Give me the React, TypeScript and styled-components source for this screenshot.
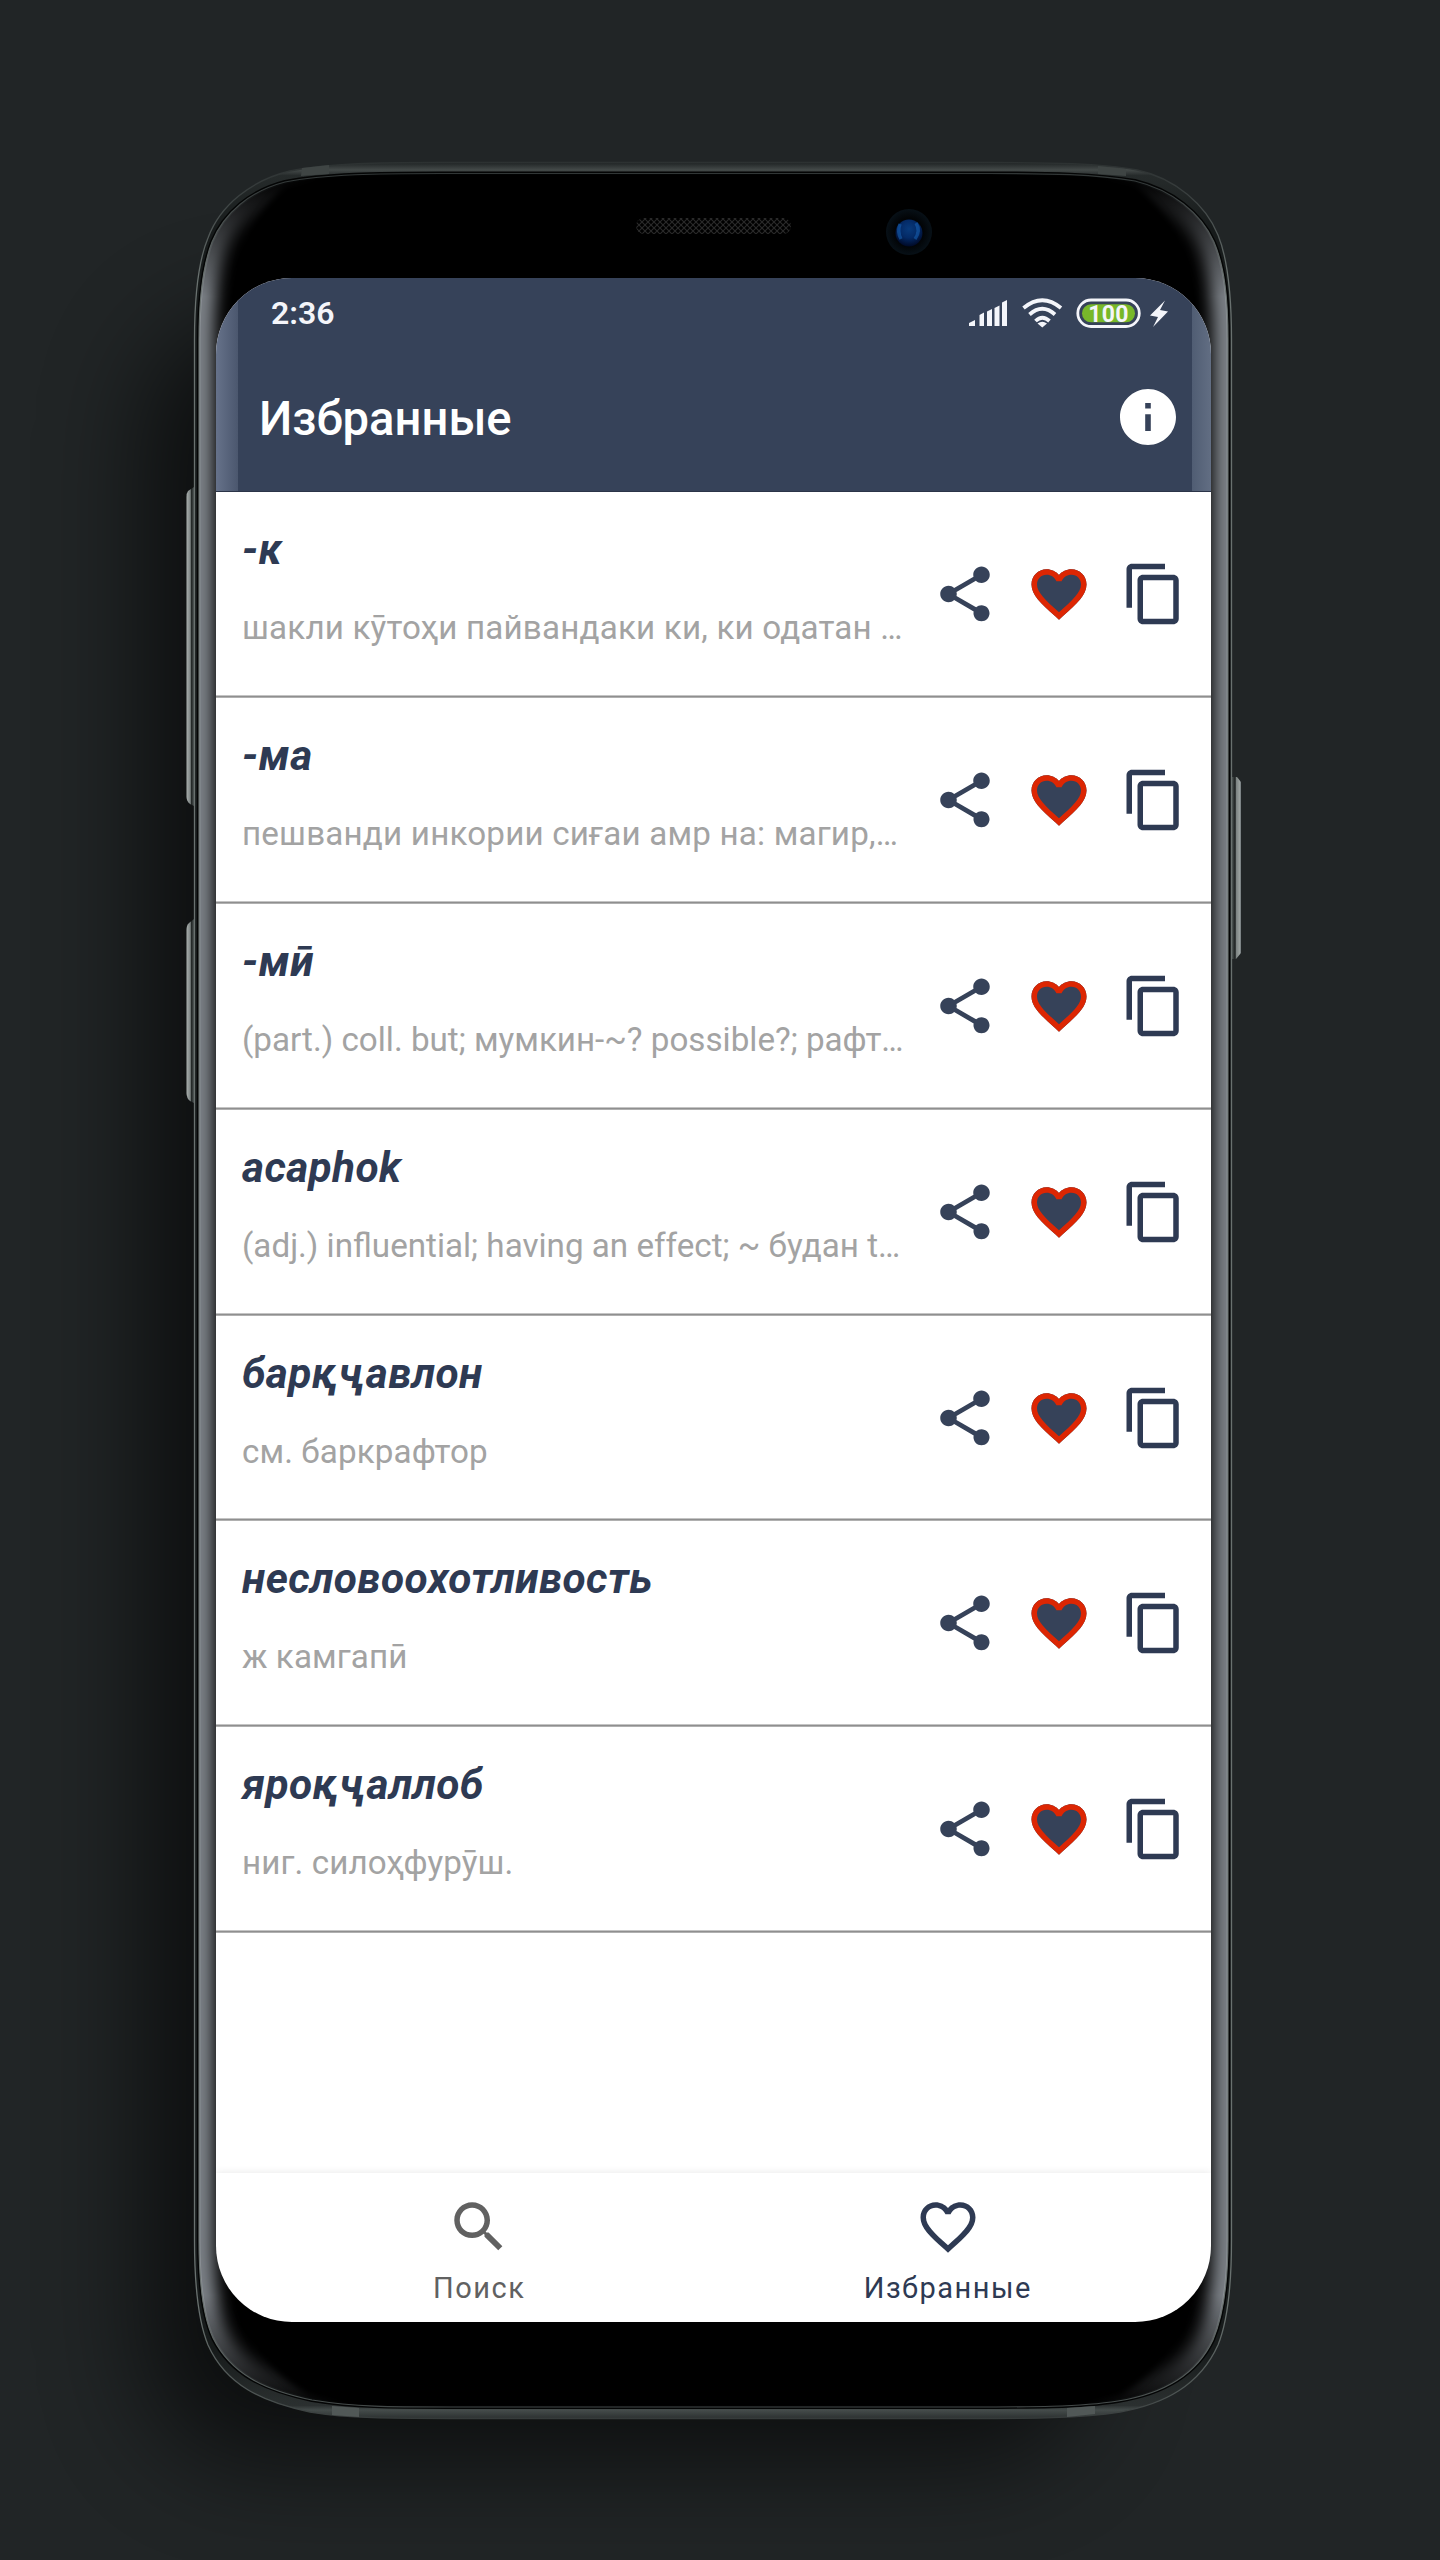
import React from "react";
import styled, { createGlobalStyle } from "styled-components";

const Global = createGlobalStyle`
  *{box-sizing:border-box}
  body{margin:0;background:#212526;font-family:Roboto,"Noto Sans",sans-serif}
`;

const Stage = styled.main`
  position: relative;
  width: 1440px;
  height: 2560px;
  padding: 278px 229px 238px 216px;
  display: flex;
  overflow: hidden;
  background: #212526;
`;

const DeviceArt = styled.svg`
  position: absolute;
  inset: 0;
`;

const Screen = styled.section`
  position: relative;
  flex: 1;
  display: flex;
  flex-direction: column;
  overflow: hidden;
  border-radius: 76px;
  background: #fff;
`;

const Header = styled.header`
  height: 214px;
  display: flex;
  flex-direction: column;
  background: linear-gradient(90deg, #66728a 0, #4b576e 22px, #364259 22px, #364259 976px, #505d73 976px, #626e83 100%);
  border-bottom: 1px solid #2b3448;
  color: #fff;
`;

const StatusBar = styled.div`
  height: 71px;
  padding: 0 40px 0 55px;
  display: flex;
  align-items: center;
  justify-content: space-between;
`;

const Clock = styled.span`
  padding-bottom: 2px;
  font-size: 32px;
  font-weight: 600;
  line-height: 38px;
  color: #f4f5fa;
`;

const StatusIcons = styled.svg`
  width: 206px;
  height: 36px;
  display: block;
`;

const TitleBar = styled.div`
  flex: 1;
  padding: 0 35px 7px 43px;
  display: flex;
  align-items: center;
  justify-content: space-between;
`;

const Title = styled.h1`
  margin: 0;
  padding-top: 4px;
  font-size: 47.2px;
  line-height: 54px;
  font-weight: 500;
`;

const Glyph = styled.svg<{ $size: number }>`
  width: ${(p) => p.$size}px;
  height: ${(p) => p.$size}px;
  display: block;
  flex: none;
`;

const List = styled.ul`
  list-style: none;
  margin: 0;
  padding: 0;
  flex: 1;
`;

const Row = styled.li`
  height: 205.9px;
  padding: 0 24px 2px 26px;
  display: flex;
  align-items: center;
  justify-content: space-between;
  background: linear-gradient(#c4c4c4 0 1px, #8f8f8f 1px 2px, #b0b0b0 2px 3px) bottom / 100% 3px no-repeat;
`;

const Entry = styled.div`
  width: 664px;
  height: 100%;
  padding-top: 33px;
  display: flex;
  flex-direction: column;
  gap: 28px;
`;

const Word = styled.h2`
  margin: 0;
  font-size: 42.4px;
  line-height: 50px;
  letter-spacing: 0.38px;
  font-weight: 700;
  font-style: italic;
  color: #2e3a53;
`;

const Meaning = styled.p<{ $spacing?: number }>`
  margin: 0;
  font-size: 33.2px;
  line-height: 50px;
  letter-spacing: ${(p) => p.$spacing ?? 0.18}px;
  color: #a3a3a3;
  white-space: nowrap;
`;

const Actions = styled.div`
  display: grid;
  grid-template-columns: 94px 95px 66px;
  align-items: center;
`;

const IconButton = styled.button`
  padding: 0;
  border: 0;
  background: none;
`;

const BottomNav = styled.nav`
  height: 149px;
  display: grid;
  padding: 0 29px;
  grid-template-columns: 1fr 1fr;
  box-shadow: 0 0 8px rgba(0, 0, 0, 0.1);
`;

const Tab = styled.a<{ $active?: boolean }>`
  display: flex;
  flex-direction: column;
  align-items: center;
  padding-top: 21px;
  gap: 8px;
  color: ${(p) => (p.$active ? "#2e3a53" : "#616161")};
  font-size: 29px;
  line-height: 40px;
  letter-spacing: 1.5px;
`;

const HEART =
  "M16.5 3c-1.74 0-3.41.81-4.5 2.09C10.91 3.81 9.24 3 7.5 3 4.42 3 2 5.42 2 8.5c0 3.78 3.4 6.86 8.55 11.54L12 21.35l1.45-1.32C18.6 15.36 22 12.28 22 8.5 22 5.42 19.58 3 16.5 3z";
const HEART_HOLE =
  "m-4.4 15.55-.1.1-.1-.1C7.14 14.24 4 11.39 4 8.5 4 6.5 5.5 5 7.5 5c1.54 0 3.04.99 3.57 2.36h1.87C13.46 5.99 14.96 5 16.5 5c2 0 3.5 1.5 3.5 3.5 0 2.89-3.14 5.74-7.9 10.05z";

const ShareIcon = () => (
  <Glyph $size={66} viewBox="0 0 24 24" fill="#364259">
    <path d="M18 16.08c-.76 0-1.44.3-1.96.77L8.91 12.7c.05-.23.09-.46.09-.7s-.04-.47-.09-.7l7.05-4.11c.54.5 1.25.81 2.04.81 1.66 0 3-1.34 3-3s-1.34-3-3-3-3 1.34-3 3c0 .24.04.47.09.7L8.04 9.81C7.5 9.31 6.79 9 6 9c-1.66 0-3 1.34-3 3s1.34 3 3 3c.79 0 1.5-.31 2.04-.81l7.12 4.16c-.05.21-.08.43-.08.65 0 1.61 1.31 2.92 2.92 2.92s2.92-1.31 2.92-2.92-1.31-2.92-2.92-2.92z" />
  </Glyph>
);

const FavoriteIcon = () => (
  <Glyph $size={66} viewBox="0 0 24 24">
    <path d={HEART} fill="#364259" />
    <path d={HEART + HEART_HOLE} fill="#dc2603" />
  </Glyph>
);

const CopyIcon = () => (
  <Glyph $size={66} viewBox="0 0 24 24" fill="#2e3a53">
    <path d="M16 1H4c-1.1 0-2 .9-2 2v14h2V3h12V1zm3 4H8c-1.1 0-2 .9-2 2v14c0 1.1.9 2 2 2h11c1.1 0 2-.9 2-2V7c0-1.1-.9-2-2-2zm0 16H8V7h11v14z" />
  </Glyph>
);

const entries: { word: string; meaning: string; spacing?: number }[] = [
  { word: "-к", meaning: "шакли кӯтоҳи пайвандаки ки, ки одатан …" },
  { word: "-ма", meaning: "пешванди инкории сиғаи амр на: магир,…" },
  { word: "-мӣ", meaning: "(part.) coll. but; мумкин-~? possible?; рафт…", spacing: 0 },
  { word: "acaphok", meaning: "(adj.) influential; having an effect; ~ будан t…", spacing: 0 },
  { word: "барқҷавлон", meaning: "см. баркрафтор", spacing: 0.1 },
  { word: "несловоохотливость", meaning: "ж камгапӣ", spacing: 0.1 },
  { word: "яроқҷаллоб", meaning: "ниг. силоҳфурӯш.", spacing: 0.1 },
];

const BODY =
  "M194.500 340C194.500 300 198 262 208 238C220 205 252 180 290 171C330 163 380 162.500 440 162.500H990C1050 162.500 1100 163 1137 170C1175 178 1206 205 1218 235C1229 262 1231.500 300 1231.500 340V2240C1231.500 2280 1229 2318 1218 2345C1200 2385 1165 2404 1120 2412C1080 2418.500 1030 2418.500 970 2418.500H450C390 2418.500 350 2418.500 310 2412C262 2402 226 2385 208 2345C197 2318 194.500 2280 194.500 2240Z";
const GLASS =
  "M199 340C199 300 202 268 212 242C224 213 250 191 285 182C325 174 380 173.500 440 173.500H990C1050 173.500 1095 174 1135 181C1172 190 1201 213 1214 242C1225 268 1228 300 1228 340V2240C1228 2280 1224 2314 1213 2340C1196 2376 1162 2394 1118 2401C1080 2407 1030 2407 970 2407H450C390 2407 355 2407 312 2400C264 2390 231 2374 213 2338C202 2314 199 2280 199 2240Z";

const Device = () => (
  <DeviceArt width="1440" height="2560" viewBox="0 0 1440 2560">
    <defs>
      <filter id="soft" filterUnits="userSpaceOnUse" x="-100" y="0" width="1640" height="2760" colorInterpolationFilters="sRGB">
        <feGaussianBlur stdDeviation="52" />
      </filter>
      <filter id="sheen" filterUnits="userSpaceOnUse" x="150" y="130" width="1140" height="2330" colorInterpolationFilters="sRGB">
        <feGaussianBlur stdDeviation="8" />
      </filter>
      <filter id="edge" filterUnits="userSpaceOnUse" x="150" y="130" width="1140" height="2330" colorInterpolationFilters="sRGB">
        <feGaussianBlur stdDeviation="3" />
      </filter>
      <linearGradient id="fade" gradientUnits="userSpaceOnUse" x1="0" x2="0" y1="174" y2="2407">
        <stop offset="0" stopColor="#000" />
        <stop offset=".008" stopColor="#1a1a1a" />
        <stop offset=".055" stopColor="#fff" />
        <stop offset=".95" stopColor="#fff" />
        <stop offset=".99" stopColor="#333" />
        <stop offset="1" stopColor="#000" />
      </linearGradient>
      <mask id="sides" maskUnits="userSpaceOnUse" x="0" y="0" width="1440" height="2560">
        <rect width="1440" height="2560" fill="url(#fade)" />
      </mask>
      <linearGradient id="button" x1="0" x2="1" y1="0" y2="0">
        <stop offset="0" stopColor="#a9afad" />
        <stop offset=".5" stopColor="#7e8584" />
        <stop offset=".65" stopColor="#222726" />
        <stop offset="1" stopColor="#4c5352" />
      </linearGradient>
      <linearGradient id="buttonRight" x1="1" x2="0" y1="0" y2="0">
        <stop offset="0" stopColor="#6c7478" />
        <stop offset=".15" stopColor="#9aa19f" />
        <stop offset=".5" stopColor="#7e8584" />
        <stop offset=".65" stopColor="#1c2020" />
        <stop offset="1" stopColor="#4c5352" />
      </linearGradient>
      <linearGradient id="rim" gradientUnits="userSpaceOnUse" x1="0" x2="0" y1="162" y2="2419">
        <stop offset="0" stopColor="#1c2021" />
        <stop offset=".0035" stopColor="#444a49" />
        <stop offset=".006" stopColor="#262b2b" />
        <stop offset=".03" stopColor="#171b1b" />
        <stop offset=".97" stopColor="#171b1b" />
        <stop offset=".994" stopColor="#2b3030" />
        <stop offset=".996" stopColor="#454c4b" />
        <stop offset="1" stopColor="#2a2f2f" />
      </linearGradient>
      <linearGradient id="outline" gradientUnits="userSpaceOnUse" x1="0" x2="0" y1="162" y2="2419">
        <stop offset="0" stopColor="#2c3131" />
        <stop offset=".015" stopColor="#3a4040" />
        <stop offset=".05" stopColor="#69716f" />
        <stop offset=".95" stopColor="#69716f" />
        <stop offset=".99" stopColor="#4c5352" />
        <stop offset="1" stopColor="#353a3a" />
      </linearGradient>
      <radialGradient id="lens" cx=".5" cy=".35" r=".65">
        <stop offset="0" stopColor="#083a7c" />
        <stop offset=".5" stopColor="#042a66" />
        <stop offset="1" stopColor="#000926" />
      </radialGradient>
      <radialGradient id="lensRing">
        <stop offset=".6" stopColor="#020406" />
        <stop offset="1" stopColor="#071017" />
      </radialGradient>
      <pattern id="mesh" width="6" height="6" patternUnits="userSpaceOnUse">
        <path d="M0 0L6 6M6 0L0 6" stroke="#2a2a2a" strokeWidth="1.1" />
      </pattern>
      <clipPath id="glassClip">
        <path d={GLASS} />
      </clipPath>
    </defs>
    <rect x="145" y="320" width="940" height="2140" rx="110" fill="#000" opacity=".62" filter="url(#soft)" />
    <path d="M194 487L188 491Q186.500 493 186.500 497V797Q186.500 801 190 804L194 806Z" fill="url(#button)" />
    <path d="M194 919L189 923Q186.500 925 186.500 930V1093Q186.500 1098 190 1101L194 1103Z" fill="url(#button)" />
    <path d="M1232 777H1237L1241 782V953L1236 959H1232Z" fill="url(#buttonRight)" />
    <path d={BODY} fill="url(#rim)" stroke="url(#outline)" strokeWidth="1.3" />
    <path d={GLASS} fill="#000" stroke="#040505" strokeWidth="4" />
    <g clipPath="url(#glassClip)">
      <g mask="url(#sides)">
        <path d={GLASS} fill="none" stroke="#7c8187" strokeWidth="30" filter="url(#sheen)" />
        <path d={GLASS} fill="none" stroke="#9ea3a8" strokeWidth="3" opacity=".5" />
      </g>
      <path
        d="M238 360V285C240 245 258 212 285 186L330 174H1090L1135 184C1164 210 1188 245 1191 290V2290C1186 2330 1160 2370 1120 2396L1080 2407H350L310 2396C266 2370 242 2330 238 2290Z"
        fill="#000"
        filter="url(#edge)"
      />
    </g>
    <path d={GLASS} fill="none" stroke="url(#outline)" strokeWidth="1.1" />
    <path d="M302 168L329 165L329 174L301 176Z" fill="#3f4544" />
    <path d="M1098 166L1126 169L1126 176L1098 174Z" fill="#3f4544" />
    <path d="M332 2406L359 2408L359 2417L332 2415Z" fill="#515857" />
    <path d="M1067 2408L1095 2406L1095 2414L1067 2417Z" fill="#515857" />
    <rect x="636" y="218" width="155" height="16" rx="8" fill="url(#mesh)" />
    <circle cx="909" cy="232" r="23" fill="url(#lensRing)" />
    <circle cx="909" cy="233" r="13.500" fill="url(#lens)" />
    <path d="M900 224Q897 232 901 239M916 223Q921 231 915 239" fill="none" stroke="#1a6abf" strokeWidth="3.500" opacity=".5" />
  </DeviceArt>
);

const Status = () => (
  <StatusIcons viewBox="965 296 206 36" fill="#f4f5fa">
    <path d="M969 326V323L975 320V326ZM979.500 326V315L984 312.500V326ZM987 326V311.500L992 309V326ZM994.500 326V308L999.500 305.500V326ZM1002 326V302.500L1007 300V326Z" />
    <g fill="none" stroke="#f4f5fa" strokeWidth="3.800">
      <path d="M1023.500 308Q1042.300 292.500 1061 308" />
      <path d="M1029.500 314.500Q1042.300 303 1055 314.500" />
      <path d="M1035.500 321Q1042.300 314.500 1049.500 321" />
    </g>
    <path d="M1037.500 323.500Q1042.300 320 1047 323.500L1042.300 327.500Z" />
    <rect x="1077.800" y="300" width="61.500" height="26.500" rx="13.250" fill="none" stroke="#f4f5fa" strokeWidth="2.800" />
    <rect x="1082" y="304.300" width="53" height="18" rx="9" fill="#78b82a" />
    <text x="1108.500" y="321.500" textAnchor="middle" fontSize="23" fontWeight="700" fontFamily="Roboto" letterSpacing=".3">100</text>
    <path d="M1165 300.500L1150 315.500L1158 317L1153 327L1168 311.500L1160 310Z" />
  </StatusIcons>
);

export default function App() {
  return (
    <Stage>
      <Global />
      <Device />
      <Screen>
        <Header>
          <StatusBar>
            <Clock>2:36</Clock>
            <Status />
          </StatusBar>
          <TitleBar>
            <Title>Избранные</Title>
            <Glyph $size={56} viewBox="2 2 20 20" fill="#fff">
              <path d="M12 2C6.480 2 2 6.480 2 12s4.480 10 10 10 10-4.480 10-10S17.520 2 12 2zm1 15h-2v-6h2v6zm0-8h-2V7h2v2z" />
            </Glyph>
          </TitleBar>
        </Header>
        <List>
          {entries.map((e) => (
            <Row key={e.word}>
              <Entry>
                <Word>{e.word}</Word>
                <Meaning $spacing={e.spacing}>{e.meaning}</Meaning>
              </Entry>
              <Actions>
                <IconButton><ShareIcon /></IconButton>
                <IconButton><FavoriteIcon /></IconButton>
                <IconButton><CopyIcon /></IconButton>
              </Actions>
            </Row>
          ))}
        </List>
        <BottomNav>
          <Tab>
            <Glyph $size={66} viewBox="0 0 24 24" fill="#616161">
              <path d="M15.500 14h-.79l-.28-.27C15.410 12.590 16 11.110 16 9.500 16 5.910 13.090 3 9.500 3S3 5.910 3 9.500 5.910 16 9.500 16c1.610 0 3.090-.59 4.230-1.570l.27.28v.79l5 4.990L20.490 19l-4.990-5zm-6 0C7.010 14 5 11.990 5 9.500S7.010 5 9.500 5 14 7.010 14 9.500 11.990 14 9.500 14z" />
            </Glyph>
            Поиск
          </Tab>
          <Tab $active>
            <Glyph $size={66} viewBox="0 0 24 24" fill="#2e3a53">
              <path d={HEART + HEART_HOLE} />
            </Glyph>
            Избранные
          </Tab>
        </BottomNav>
      </Screen>
    </Stage>
  );
}
